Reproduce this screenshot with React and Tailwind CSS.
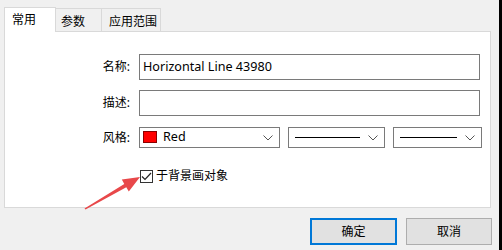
import React from "react";

const FONT = { fontFamily: '"Noto Sans", "Noto Sans CJK SC", sans-serif' };

const Chevron = () => (
  <svg width="10" height="6" viewBox="0 0 10 6" className="shrink-0">
    <path d="M0.5 0.5 L5 5 L9.5 0.5" fill="none" stroke="#555" strokeWidth="1" />
  </svg>
);

const LineCombo = ({ width, lineWidth }) => (
  <div
    className="flex h-[21px] items-center justify-between border border-[#7a7a7a] bg-white pl-[6px] pr-[6px]"
    style={{ width }}
  >
    <div className="h-px bg-black" style={{ width: lineWidth }} />
    <Chevron />
  </div>
);

const Tab = ({ label, active, className = "" }) =>
  active ? (
    <div className="relative z-10 -mb-px flex h-[25px] w-[52px] items-start border border-b-0 border-[#d9d9d9] bg-white pl-[7px] pt-[3px] text-[12px]">
      {label}
    </div>
  ) : (
    <div
      className={
        "-ml-px flex h-[23px] items-start border border-b-0 border-[#d9d9d9] bg-[#f0f0f0] pt-[4px] text-[12px] " +
        className
      }
    >
      {label}
    </div>
  );

const Row = ({ label, children, className = "" }) => (
  <div className={"flex items-center " + className}>
    <div className="w-[126px] pr-[1px] text-right text-[12px]">{label}</div>
    <div className="ml-[8px] flex items-center">{children}</div>
  </div>
);

export default function App() {
  return (
    <div className="flex h-[250px] w-[502px] overflow-hidden bg-[#f0f0f0] text-black" style={FONT}>
      <div className="relative w-[499px] pl-[4px] pt-[7px]">
        <div className="flex items-end">
          <Tab label="常用" active />
          <Tab label="参数" className="w-[47px] pl-[5px]" />
          <Tab label="应用范围" className="w-[60px] pl-[7px]" />
        </div>
        <div className="h-[177px] w-[487px] border border-[#d9d9d9] bg-white pt-[22px]">
          <Row label="名称:">
            <div className="flex h-[26px] w-[341px] items-center border border-[#7a7a7a] bg-white pl-[3px] text-[12.6px]">
              Horizontal Line 43980
            </div>
          </Row>
          <Row label="描述:" className="mt-[10px]">
            <div className="h-[26px] w-[341px] border border-[#7a7a7a] bg-white" />
          </Row>
          <Row label="风格:" className="mt-[11px]">
            <div className="flex h-[21px] w-[141px] items-center justify-between border border-[#7a7a7a] bg-white pl-[3px] pr-[6px]">
              <div className="flex items-center">
                <div className="h-[12px] w-[14px] border border-[#8a0000] bg-[#ff0000]" />
                <span className="ml-[6px] text-[12.6px]">Red</span>
              </div>
              <Chevron />
            </div>
            <div className="ml-[8px]">
              <LineCombo width={97} lineWidth={65} />
            </div>
            <div className="ml-[8px]">
              <LineCombo width={89} lineWidth={57} />
            </div>
          </Row>
          <div className="ml-[135px] mt-[19px] flex items-center">
            <div className="flex h-[13px] w-[13px] items-center justify-center border border-[#333] bg-white">
              <svg width="11" height="9" viewBox="0 0 11 9">
                <path d="M1 4.5 L4 7.5 L10 1" fill="none" stroke="#222" strokeWidth="1.2" />
              </svg>
            </div>
            <span className="ml-[3px] text-[12px]">于背景画对象</span>
          </div>
        </div>
        <div className="mt-[10px] flex w-[488px] justify-end gap-[9px]">
          <button className="flex h-[27px] w-[87px] items-center justify-center border-2 border-[#0078d7] bg-[#e1e1e1] text-[12px]">
            确定
          </button>
          <button className="flex h-[27px] w-[86px] items-center justify-center border border-[#adadad] bg-[#e1e1e1] text-[12px]">
            取消
          </button>
        </div>
        <svg className="pointer-events-none absolute left-0 top-0" width="499" height="250">
          <polygon
            points="84.5,208.6 124.3,183.9 121.8,179.6 140,177 128.8,191.6 126.3,187.3 85.5,209.4"
            fill="#e8484a"
          />
        </svg>
      </div>
      <div className="w-[3px] bg-black" />
    </div>
  );
}
